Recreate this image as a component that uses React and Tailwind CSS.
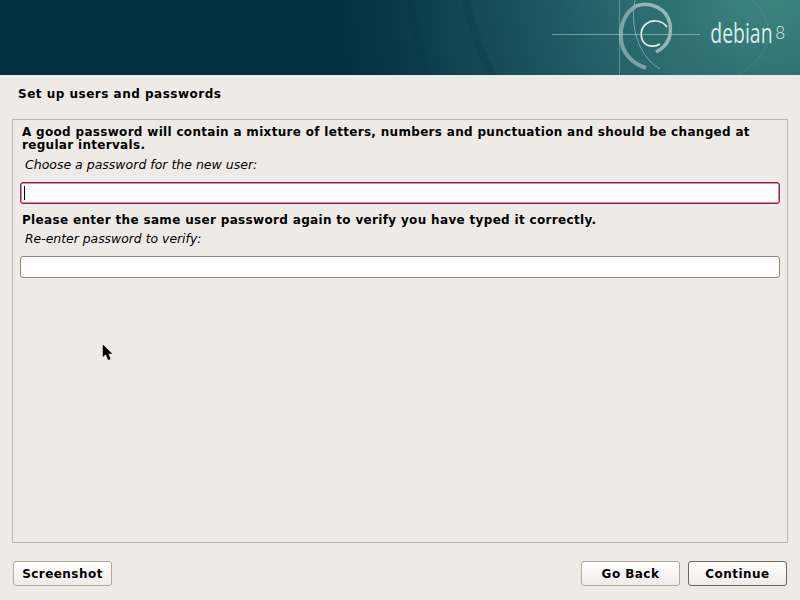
const font = { fontFamily: '"DejaVu Sans", sans-serif' };

function Banner() {
  return (
    <div className="relative h-[75px] shrink-0 overflow-hidden bg-[#033042]">
      <svg className="absolute inset-0" width="800" height="75" viewBox="0 0 800 75">
        <defs>
          <radialGradient id="glow" gradientUnits="userSpaceOnUse" cx="770" cy="-20" r="430">
            <stop offset="0" stopColor="#3f8783" />
            <stop offset="0.3" stopColor="#2c6d70" />
            <stop offset="0.55" stopColor="#1c5560" />
            <stop offset="0.85" stopColor="#0b3b4d" />
            <stop offset="1" stopColor="#033042" />
          </radialGradient>
        </defs>
        <rect width="800" height="75" fill="url(#glow)" />
        <path d="M466 0C472 28 482 55 492 75M410 0C414 25 420 52 428 75" fill="none" stroke="#06313f" strokeOpacity="0.2" strokeWidth="8" />
        <path d="M752 0C775 20 775 55 738 75" fill="none" stroke="#6aa9a2" strokeOpacity="0.25" />
        {/* crosshair */}
        <path d="M552 34.5H700" stroke="#b9d6d2" strokeOpacity="0.55" />
        <path d="M619.5 0V75" stroke="#a9c9c6" strokeOpacity="0.45" />
        {/* swirl */}
        <path d="M636 6C650 1 667 8 670 24C672 38 666 47 656 52" fill="none" stroke="#a5c4c2" strokeOpacity="0.85" strokeWidth="3.5" />
        <path d="M636 6C624 13 620 27 621 39C622 52 631 63 646 68" fill="none" stroke="#9dbebd" strokeOpacity="0.7" strokeWidth="4" />
        <path d="M635 0C630 25 637 55 660 69" fill="none" stroke="#b5d0ce" strokeOpacity="0.6" />
        <path d="M667 27C662 20 652 19 646 24C639 30 640 41 647 45C652 47 657 46 660 44" fill="none" stroke="#e4efed" strokeWidth="1.7" />
      </svg>
      <div className="relative flex h-full items-start justify-end pr-[15px] pt-[16px] text-[#dcebe8]">
        <span className="origin-right scale-x-[0.72] text-[27px] leading-[34px]" style={{ fontFamily: '"Open Sans", sans-serif' }}>debian</span>
        <span className="ml-[3px] text-[17px] font-light leading-[34px]" style={{ fontFamily: 'Lato, sans-serif' }}>8</span>
      </div>
    </div>
  );
}

function TextField({ focused, cursor }) {
  return (
    <div
      className={`mx-[7px] flex h-[22px] items-center rounded-[3px] border bg-white pl-[3px] ${
        focused ? 'border-[#a3164f] shadow-[inset_0_0_0_0.5px_#a3164f]' : 'border-[#94897c]'
      }`}
    >
      {cursor && <span className="h-[14px] w-px bg-black" />}
    </div>
  );
}

function WizardButton({ children, dark }) {
  return (
    <button
      className={`h-[25px] w-[99px] rounded-[3px] border bg-gradient-to-b from-white to-[#efebe7] text-[12px] font-bold tracking-[0.45px] text-black ${
        dark ? 'border-[#6f655b]' : 'border-[#b5a99a]'
      }`}
    >
      {children}
    </button>
  );
}

export default function App() {
  return (
    <div className="relative flex h-[600px] w-[800px] flex-col overflow-hidden bg-[#eeebe7] text-black" style={font}>
      <Banner />

      <h1 className="ml-[18px] mt-[11px] text-[12px] font-bold leading-[16px] tracking-[0.5px]">Set up users and passwords</h1>

      <div className="mx-[12px] mt-[17px] h-[424px] border border-[#bfb4a6] px-0 pt-[6px]">
        <p className="px-[9px] text-[12px] font-bold leading-[13px] tracking-[0.31px]">
          A good password will contain a mixture of letters, numbers and punctuation and should be changed at regular intervals.
        </p>
        <p className="mb-[9px] mt-[5px] pl-[12px] text-[12.5px] italic leading-[16px]">Choose a password for the new user:</p>
        <TextField focused cursor />

        <p className="mt-[8px] px-[9px] text-[12px] font-bold leading-[16px] tracking-[0.33px]">
          Please enter the same user password again to verify you have typed it correctly.
        </p>
        <p className="mb-[9px] mt-[3px] pl-[12px] text-[12.4px] italic leading-[16px]">Re-enter password to verify:</p>
        <TextField />
      </div>

      <div className="mx-[13px] mt-[18px] flex items-center">
        <WizardButton>Screenshot</WizardButton>
        <div className="ml-auto flex gap-[8px]">
          <WizardButton>Go Back</WizardButton>
          <WizardButton dark>Continue</WizardButton>
        </div>
      </div>

      {/* mouse pointer */}
      <svg className="absolute left-[102px] top-[344px]" width="12" height="17" viewBox="0 0 12 17">
        <path d="M1 1V12.5L3.8 10L6.2 15.5H7.6L8.2 14.5L6 9.5H9.8Z" fill="#000" stroke="#000" strokeWidth="0.5" />
      </svg>
    </div>
  );
}
